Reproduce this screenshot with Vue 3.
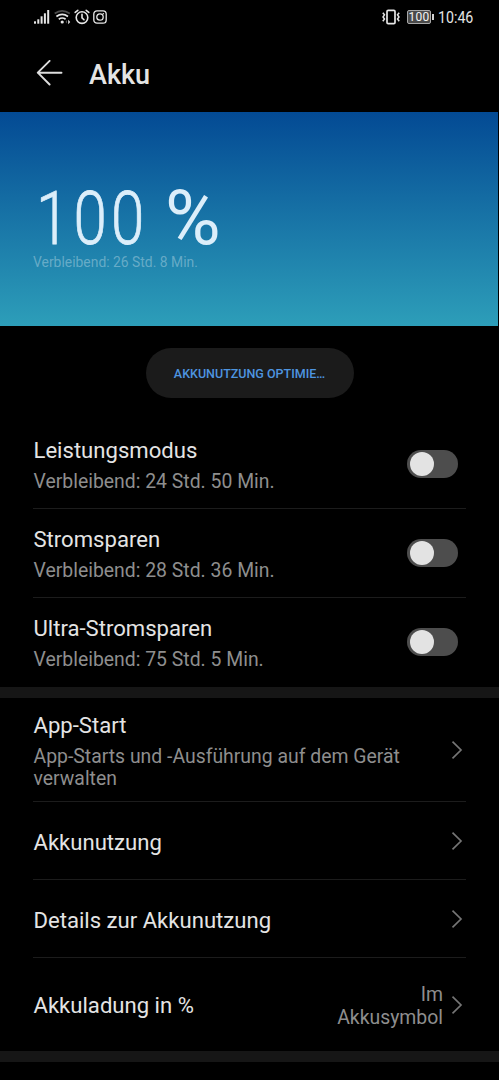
<script setup>
import { ref } from 'vue'

const modes = ref([
  { title: 'Leistungsmodus', left: '24 Std. 50 Min.', on: false },
  { title: 'Stromsparen', left: '28 Std. 36 Min.', on: false },
  { title: 'Ultra-Stromsparen', left: '75 Std. 5 Min.', on: false },
])

const links = [
  { title: 'App-Start', sub: 'App-Starts und -Ausführung auf dem Gerät verwalten', size: 'tall' },
  { title: 'Akkunutzung', size: 'short' },
  { title: 'Details zur Akkunutzung', size: 'short' },
  { title: 'Akkuladung in %', value: 'Im Akkusymbol', size: 'last' },
]
</script>

<template>
  <main class="screen">
    <div class="status">
      <div class="status-left">
        <svg class="signal" width="16" height="16" viewBox="0 0 16 16" fill="#e6e6e6">
          <rect x="0" y="12.3" width="2" height="2.4" /><rect x="3.3" y="10.3" width="2" height="4.4" />
          <rect x="6.6" y="7.3" width="2" height="7.4" /><rect x="9.9" y="4.3" width="2" height="10.4" />
          <rect x="13.2" y="1" width="2" height="13.7" />
        </svg>
        <svg class="wifi" width="17" height="16" viewBox="0 0 17 16" fill="none" stroke="#e6e6e6" stroke-width="1.7">
          <path d="M.7 4.5Q8 -.9 15.8 4.5" stroke="#4d4d4d" />
          <path d="M2.4 7.5Q8.2 3.2 14 7.5M4.8 10.3Q8.2 7.7 11.6 10.3" />
          <circle cx="8.2" cy="13" r="1.6" fill="#e6e6e6" stroke="none" />
          <path d="M12.9 10.8v3.8l-1.3-1.6z" fill="#666" stroke="none" />
          <path d="M14.2 10.8l2 2.2-2 2.2z" fill="#e6e6e6" stroke="none" />
        </svg>
        <svg class="alarm" width="16" height="16" viewBox="0 0 16 16" fill="none" stroke="#e6e6e6" stroke-width="1.6" stroke-linecap="round">
          <circle cx="8" cy="8.6" r="5.8" /><path d="M8 5.3v3.5l2 2M1.2 3.4L3.8 1.3M14.8 3.4L12.2 1.3" />
        </svg>
        <svg width="14" height="14" viewBox="0 0 14 14" fill="none" stroke="#e6e6e6" stroke-width="1.3">
          <rect x=".8" y=".8" width="12.4" height="12.4" rx="3.2" /><circle cx="7" cy="7" r="3.2" />
          <circle cx="10.3" cy="3.8" r=".8" fill="#e6e6e6" stroke="none" />
        </svg>
      </div>
      <div class="status-right">
        <svg width="19" height="16" viewBox="0 0 19 16" fill="none" stroke="#e6e6e6">
          <rect x="5" y="1.4" width="8" height="13.2" rx="1.2" stroke-width="1.7" />
          <path d="M.8 3.8l1.7 2L1 8l1.5 2L.8 12.2M17.2 3.8l-1.7 2L17 8l-1.5 2 1.7 2.2" stroke-width="1.5" />
        </svg>
        <span class="battery">100</span>
        <span class="clock">10:46</span>
      </div>
    </div>

    <header class="bar">
      <svg width="27" height="26" viewBox="0 0 27 26" fill="none" stroke="#dedede" stroke-width="1.9" stroke-linecap="round" stroke-linejoin="round">
        <path d="M25.5 12.7H1.8M13.6 .9L1.8 12.7l11.8 11.8" />
      </svg>
      <h1>Akku</h1>
    </header>

    <section class="hero">
      <div class="level"><span class="num">100</span><span class="pct">%</span></div>
      <p>Verbleibend: 26 Std. 8 Min.</p>
    </section>

    <div class="action">
      <button class="pill">AKKUNUTZUNG OPTIMIE…</button>
    </div>

    <section class="group">
      <div v-for="m in modes" :key="m.title" class="row mode">
        <div class="text">
          <h2>{{ m.title }}</h2>
          <p>Verbleibend: {{ m.left }}</p>
        </div>
        <button class="switch" :class="{ on: m.on }" role="switch" :aria-checked="m.on" :aria-label="m.title" @click="m.on = !m.on"><i></i></button>
      </div>
    </section>

    <section class="group">
      <div v-for="l in links" :key="l.title" class="row" :class="l.size">
        <div class="text">
          <h2>{{ l.title }}</h2>
          <p v-if="l.sub">{{ l.sub }}</p>
        </div>
        <span v-if="l.value" class="value">{{ l.value }}</span>
        <svg class="chevron" width="12" height="20" viewBox="0 0 12 20" fill="none" stroke="#757575" stroke-width="1.7">
          <path d="M1.5 1.6L10 10l-8.5 8.4" />
        </svg>
      </div>
    </section>
  </main>
</template>

<style>
html, body { background: #000; }
</style>

<style scoped>
.screen {
  width: 499px;
  height: 1080px;
  overflow: hidden;
  background: #000;
  color: #e4e4e4;
  font-family: Roboto, "Liberation Sans", sans-serif;
}
h1, h2, p { margin: 0; font-weight: 400; }
button { border: 0; padding: 0; font: inherit; }
svg { display: block; flex: none; }

.status { height: 34px; display: flex; justify-content: space-between; align-items: center; padding: 0 25px 0 34px; }
.status-left, .status-right { display: flex; align-items: center; }
.wifi { margin-left: 4px; }
.alarm { margin: 0 3px; }
.battery {
  position: relative;
  box-sizing: border-box;
  width: 24px;
  height: 14px;
  margin: 0 7px 0 6px;
  border: 1px solid #a8a8a8;
  border-radius: 2px;
  background: #4a4a4a;
  font-size: 12px;
  line-height: 12.5px;
  letter-spacing: .2px;
  text-align: center;
  color: #f4f4f4;
}
.battery::after { content: ""; position: absolute; right: -3.5px; top: 3px; width: 1.5px; height: 6px; background: #d0d0d0; }
.clock { font-size: 16.5px; line-height: 20px; width: 36px; padding-top: 1px; white-space: nowrap; transform: scaleX(.86); transform-origin: 0 50%; }

.bar { height: 78px; display: flex; align-items: center; gap: 26px; padding: 0 36px; box-sizing: border-box; }
.bar h1 { padding-top: 3px; font-size: 27px; font-weight: 500; line-height: 34px; }

.hero {
  width: 498px;
  height: 214px;
  box-sizing: border-box;
  padding: 75px 33px 0;
  background: linear-gradient(#034a94, #2d9eb9);
}
.level { display: flex; height: 67px; line-height: 62px; color: #dceefa; }
.num {
  width: 132px;
  font-size: 74px;
  font-weight: 300;
  letter-spacing: 5.3px;
  -webkit-text-stroke: .8px #dceefa;
  transform: translate(3px, 1px) scaleX(.81);
  transform-origin: 0 50%;
}
.pct { font-size: 76px; }
.hero p { font-size: 13.9px; line-height: 16px; color: rgba(255, 255, 255, .33); }

.action { height: 94px; box-sizing: border-box; padding-top: 22px; display: flex; justify-content: center; align-items: flex-start; }
.pill { width: 208px; height: 50px; border-radius: 25px; background: #1b1b1b; color: #4e95e0; font-size: 12.5px; font-weight: 500; white-space: nowrap; }

.group { border-bottom: 11px solid #161616; }
.row { position: relative; display: flex; align-items: center; box-sizing: border-box; padding: 0 36px 0 33.5px; }
.row:not(:last-child)::after { content: ""; position: absolute; left: 33px; right: 33px; bottom: 0; height: 1px; background: #1c1c1c; }
.text { flex: 1; }
.row h2 { font-size: 22.1px; line-height: 28px; }
.row p { font-size: 19.4px; line-height: 22px; color: #8e8e8e; }
.mode { height: 89px; padding-right: 41px; padding-bottom: 1px; }
.mode .text { padding-top: 1px; }
.mode p { margin-top: 7px; }
.tall { height: 104px; padding-bottom: 1px; }
.tall .text { padding-top: 2px; }
.tall p { margin-top: 7px; width: 385px; line-height: 22.5px; }
.short { height: 78px; }
.short h2, .last h2 { padding-top: 1px; }
.last { height: 93px; }
.value { width: 110px; margin-right: 8px; padding-top: 4px; font-size: 19.4px; line-height: 22.5px; text-align: right; color: #8e8e8e; }

.switch { position: relative; width: 51px; height: 28px; border-radius: 14px; background: #4d4d4d; }
.switch i { position: absolute; left: 2.5px; top: 2px; width: 24px; height: 24px; border-radius: 50%; background: #e3e3e3; }
.switch.on { background: #2f7fe0; }
.switch.on i { left: 24.5px; }
</style>
